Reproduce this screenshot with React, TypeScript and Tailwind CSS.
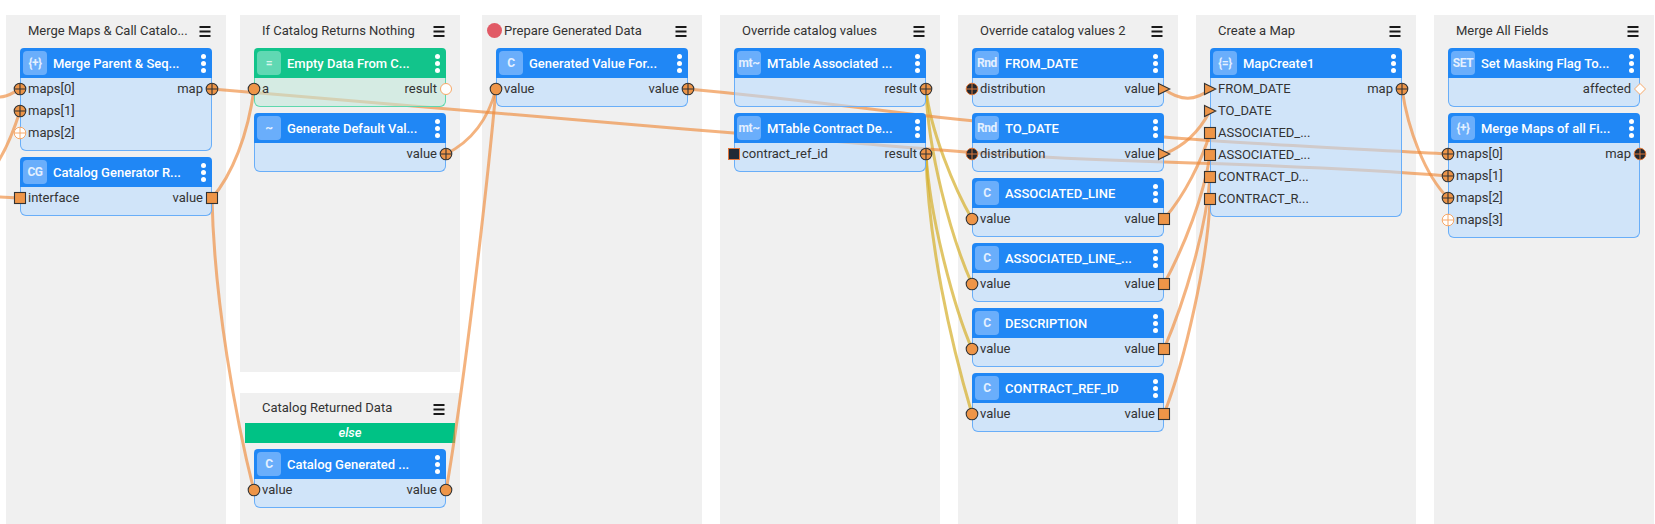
import React from "react";

type PortKind = "plus" | "plusEmpty" | "plusDark" | "circle" | "circleEmpty" | "square" | "squareDark" | "tri" | "diamond";
type Row = { l?: string; lp?: PortKind; r?: string; rp?: PortKind };
type NodeDef = { icon: string; title: string; rows: Row[]; green?: boolean };

const OR = "#ee9548";
const DK = "#333333";
const LO = "#f7a868";

function Port({ kind, side }: { kind: PortKind; side: "l" | "r" }) {
  const pos =
    side === "l"
      ? "left-[-1px] -translate-x-1/2"
      : "right-[-1px] translate-x-1/2";
  return (
    <svg viewBox="0 0 14 14" className={`absolute top-1/2 -translate-y-1/2 w-[14px] h-[14px] ${pos}`}>
      {kind === "plus" && (
        <g stroke={DK} strokeWidth="1.1">
          <circle cx="7" cy="7" r="5.8" fill={OR} />
          <path d="M1.2 7H12.8M7 1.2V12.8" fill="none" />
        </g>
      )}
      {kind === "plusEmpty" && (
        <g stroke={LO} strokeWidth="1">
          <circle cx="7" cy="7" r="5.8" fill="#fff" />
          <path d="M1.2 7H12.8M7 1.2V12.8" fill="none" />
        </g>
      )}
      {kind === "plusDark" && (
        <g>
          <circle cx="7" cy="7" r="5.8" fill="#24282e" stroke="#d9763a" strokeWidth="1" />
          <path d="M1.2 7H12.8M7 1.2V12.8" fill="none" stroke="#d9763a" strokeWidth="1" />
        </g>
      )}
      {kind === "circle" && <circle cx="7" cy="7" r="5.8" fill={OR} stroke={DK} strokeWidth="1.1" />}
      {kind === "circleEmpty" && <circle cx="7" cy="7" r="5.5" fill="#fff" stroke={LO} strokeWidth="1" />}
      {kind === "square" && <rect x="1.5" y="1.5" width="11" height="11" fill={OR} stroke={DK} strokeWidth="1.1" />}
      {kind === "squareDark" && <rect x="1.5" y="1.5" width="11" height="11" fill="#1f2a36" stroke="#e0743a" strokeWidth="1" />}
      {kind === "tri" && <polygon points="1.5,1.5 12.8,7 1.5,12.5" fill={OR} stroke={DK} strokeWidth="1.1" />}
      {kind === "diamond" && <polygon points="7,1.5 12.5,7 7,12.5 1.5,7" fill="#fff" stroke={LO} strokeWidth="1" />}
    </svg>
  );
}

function Kebab() {
  return (
    <div className="flex flex-col gap-[2px] shrink-0 mr-[6px]">
      <span className="block w-[5px] h-[5px] rounded-full bg-white" />
      <span className="block w-[5px] h-[5px] rounded-full bg-white" />
      <span className="block w-[5px] h-[5px] rounded-full bg-white" />
    </div>
  );
}

function NodeCard({ node }: { node: NodeDef }) {
  const g = node.green;
  return (
    <div className="relative z-20 w-[192px]">
      <div className={`h-[30px] flex items-center rounded-t-[4px] pl-[3px] ${g ? "bg-[#12c48b]" : "bg-[#2087f5]"}`}>
        <div
          className={`w-[24px] h-[24px] rounded-[4px] shrink-0 flex items-center justify-center text-[12px] font-bold tracking-[-0.4px] ${
            g ? "bg-[#60d8b3] text-[#d8f5ea]" : "bg-[#6aaefb] text-[#e4f0ff]"
          }`}
        >
          {node.icon}
        </div>
        <div className="ml-[6px] pt-[1px] flex-1 text-white text-[13px] font-medium whitespace-nowrap overflow-hidden">{node.title}</div>
        <Kebab />
      </div>
      <div
        className={`border-x border-b rounded-b-[6px] pb-[6px] ${
          g ? "border-[#5fd8ad] bg-[rgba(195,232,218,0.6)]" : "border-[#69aef8] bg-[rgba(187,220,255,0.6)]"
        }`}
      >
        {node.rows.map((row, i) => (
          <div key={i} className="relative h-[22px] flex items-center justify-between pl-[7px] pr-[8px] text-[13px] text-[#333]">
            <span>{row.l}</span>
            <span>{row.r}</span>
            {row.lp && <Port kind={row.lp} side="l" />}
            {row.rp && <Port kind={row.rp} side="r" />}
          </div>
        ))}
      </div>
    </div>
  );
}

function MenuIcon() {
  return (
    <svg viewBox="0 0 12 11" className="w-[12px] h-[11px] shrink-0 mr-[1px] mt-[3px]">
      <path d="M0.5 1H11.5M0.5 5.5H11.5M0.5 10H11.5" stroke="#1a1a1a" strokeWidth="1.8" fill="none" />
    </svg>
  );
}

function PanelHead({ title, dot, compact }: { title: string; dot?: boolean; compact?: boolean }) {
  return (
    <div className="relative h-[30px] flex items-center justify-between pl-[8px]">
      {dot && <span className="absolute left-[-9px] top-[8px] w-[15px] h-[15px] rounded-full bg-[#e15a66]" />}
      <span className={`${compact ? "" : "pt-[1px]"} text-[13px] text-[#333] whitespace-nowrap`}>{title}</span>
      <MenuIcon />
    </div>
  );
}

function Panel({ title, nodes, dot, className = "" }: { title: string; nodes: NodeDef[]; dot?: boolean; className?: string }) {
  return (
    <section className={`w-[220px] shrink-0 bg-[#f0f0f0] px-[14px] ${className}`}>
      <PanelHead title={title} dot={dot} />
      <div className="mt-[3px] flex flex-col gap-[6px]">
        {nodes.map((n, i) => (
          <NodeCard key={i} node={n} />
        ))}
      </div>
    </section>
  );
}

const O = "#ee8a3a";
const Y = "#d4ae28";
const orangeWires = [
  "M0 97 C8 97 12 93 20 89",
  "M-4 165 C6 150 14 130 20 111",
  "M0 197 C8 197 12 198 20 198",
  "M212 89 C250 92 500 114 734 133 S1000 157 1164 162 S1400 172 1448 176",
  "M212 198 C232 175 248 135 254 89",
  "M212 198 C214 300 236 420 254 491",
  "M446 154 C470 142 488 120 496 89",
  "M446 491 C462 400 486 200 496 89",
  "M688 89 C720 92 800 100 903 113 S1100 131 1164 137 S1380 150 1448 154",
  "M1164 89 C1180 101 1196 101 1210 89",
  "M1164 154 C1185 146 1200 130 1210 111",
  "M1164 219 C1185 195 1202 160 1210 133",
  "M1164 284 C1185 245 1204 195 1210 155",
  "M1164 349 C1185 300 1206 230 1210 177",
  "M1164 414 C1185 360 1208 260 1210 199",
  "M1402 89 C1408 130 1425 175 1448 198",
];
const yellowWires = [
  "M926 89 C930 130 955 190 972 219",
  "M926 89 C928 150 950 235 972 284",
  "M926 154 C930 220 955 310 972 349",
  "M926 154 C928 240 950 340 972 414",
];

export default function App() {
  return (
    <div className="relative w-[1655px] h-[524px] overflow-hidden bg-white [font-family:Roboto,sans-serif]">
      <div className="flex h-full pt-[15px] pl-[6px]">
        <Panel
          title="Merge Maps & Call Catalo..."
          nodes={[
            {
              icon: "{+}",
              title: "Merge Parent & Seq...",
              rows: [
                { l: "maps[0]", lp: "plus", r: "map", rp: "plus" },
                { l: "maps[1]", lp: "plus" },
                { l: "maps[2]", lp: "plusEmpty" },
              ],
            },
            { icon: "CG", title: "Catalog Generator R...", rows: [{ l: "interface", lp: "square", r: "value", rp: "square" }] },
          ]}
        />
        <div className="ml-[14px] w-[220px] shrink-0 flex flex-col gap-[21px]">
          <Panel
            title="If Catalog Returns Nothing"
            className="h-[357px]"
            nodes={[
              { icon: "=", title: "Empty Data From C...", green: true, rows: [{ l: "a", lp: "circle", r: "result", rp: "circleEmpty" }] },
              { icon: "~", title: "Generate Default Val...", rows: [{ r: "value", rp: "plus" }] },
            ]}
          />
          <section className="flex-1 bg-[#f0f0f0] px-[14px]">
            <PanelHead title="Catalog Returned Data" compact />
            <div className="-mx-[9px] h-[20px] bg-[#00c285] flex items-center justify-center text-[13px] italic font-medium text-white">else</div>
            <div className="mt-[6px]">
              <NodeCard node={{ icon: "C", title: "Catalog Generated ...", rows: [{ l: "value", lp: "circle", r: "value", rp: "circle" }] }} />
            </div>
          </section>
        </div>
        <Panel
          className="ml-[22px]"
          dot
          title="Prepare Generated Data"
          nodes={[{ icon: "C", title: "Generated Value For...", rows: [{ l: "value", lp: "circle", r: "value", rp: "plus" }] }]}
        />
        <Panel
          className="ml-[18px]"
          title="Override catalog values"
          nodes={[
            { icon: "mt~", title: "MTable Associated ...", rows: [{ r: "result", rp: "plus" }] },
            { icon: "mt~", title: "MTable Contract De...", rows: [{ l: "contract_ref_id", lp: "squareDark", r: "result", rp: "plus" }] },
          ]}
        />
        <Panel
          className="ml-[18px]"
          title="Override catalog values 2"
          nodes={[
            { icon: "Rnd", title: "FROM_DATE", rows: [{ l: "distribution", lp: "plusDark", r: "value", rp: "tri" }] },
            { icon: "Rnd", title: "TO_DATE", rows: [{ l: "distribution", lp: "plusDark", r: "value", rp: "tri" }] },
            { icon: "C", title: "ASSOCIATED_LINE", rows: [{ l: "value", lp: "circle", r: "value", rp: "square" }] },
            { icon: "C", title: "ASSOCIATED_LINE_...", rows: [{ l: "value", lp: "circle", r: "value", rp: "square" }] },
            { icon: "C", title: "DESCRIPTION", rows: [{ l: "value", lp: "circle", r: "value", rp: "square" }] },
            { icon: "C", title: "CONTRACT_REF_ID", rows: [{ l: "value", lp: "circle", r: "value", rp: "square" }] },
          ]}
        />
        <Panel
          className="ml-[18px]"
          title="Create a Map"
          nodes={[
            {
              icon: "{=}",
              title: "MapCreate1",
              rows: [
                { l: "FROM_DATE", lp: "tri", r: "map", rp: "plus" },
                { l: "TO_DATE", lp: "tri" },
                { l: "ASSOCIATED_...", lp: "square" },
                { l: "ASSOCIATED_...", lp: "square" },
                { l: "CONTRACT_D...", lp: "square" },
                { l: "CONTRACT_R...", lp: "square" },
              ],
            },
          ]}
        />
        <Panel
          className="ml-[18px]"
          title="Merge All Fields"
          nodes={[
            { icon: "SET", title: "Set Masking Flag To...", rows: [{ r: "affected", rp: "diamond" }] },
            {
              icon: "{+}",
              title: "Merge Maps of all Fi...",
              rows: [
                { l: "maps[0]", lp: "plus", r: "map", rp: "plusDark" },
                { l: "maps[1]", lp: "plus" },
                { l: "maps[2]", lp: "plus" },
                { l: "maps[3]", lp: "plusEmpty" },
              ],
            },
          ]}
        />
      </div>
      <svg className="absolute left-0 top-0 z-10 pointer-events-none" width="1655" height="524" viewBox="0 0 1655 524">
        <g fill="none" strokeWidth="3" strokeLinecap="round">
          {yellowWires.map((d, i) => (
            <path key={i} d={d} stroke={Y} strokeOpacity="0.7" />
          ))}
          {orangeWires.map((d, i) => (
            <path key={i} d={d} stroke={O} strokeOpacity="0.65" />
          ))}
        </g>
      </svg>
    </div>
  );
}
